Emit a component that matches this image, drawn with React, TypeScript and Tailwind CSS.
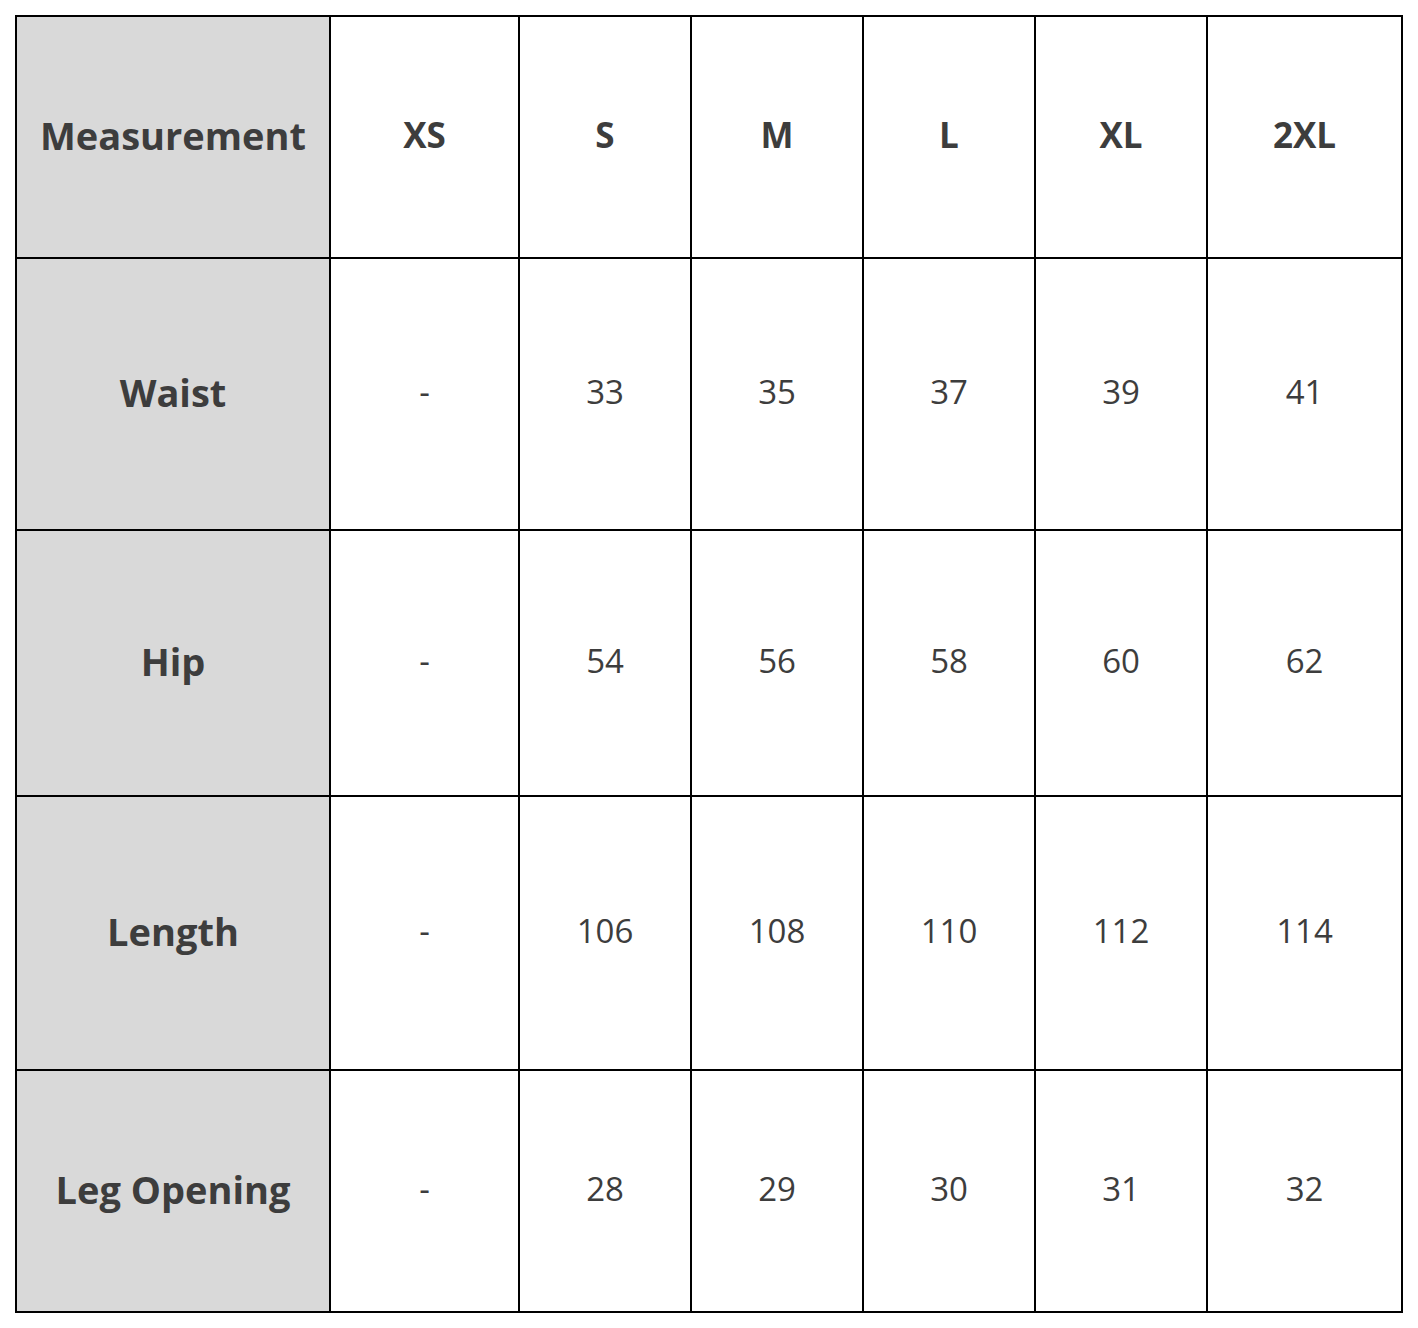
const sizes = ["XS", "S", "M", "L", "XL", "2XL"];

const rows: { label: string; values: string[] }[] = [
  { label: "Waist", values: ["-", "33", "35", "37", "39", "41"] },
  { label: "Hip", values: ["-", "54", "56", "58", "60", "62"] },
  { label: "Length", values: ["-", "106", "108", "110", "112", "114"] },
  { label: "Leg Opening", values: ["-", "28", "29", "30", "31", "32"] },
];

function App() {
  return (
    <div className="min-h-[1328px] w-[1418px] bg-white pl-[15px] pt-[15px] font-['Open_Sans','Noto_Sans',sans-serif] text-[#3d3d3d]">
      <div className="grid w-[1388px] grid-cols-[312px_187px_170px_170px_170px_170px_193px] grid-rows-[240px_270px_264px_272px_240px] gap-[2px] bg-black p-[2px]">
        <div className="flex items-center justify-center bg-[#d9d9d9] pb-1 text-[38px] font-bold">Measurement</div>
        {sizes.map((s) => (
          <div key={s} className="flex items-center justify-center bg-white pb-1 text-[35px] font-bold">
            {s}
          </div>
        ))}
        {rows.map((row) => (
          <Row key={row.label} label={row.label} values={row.values} />
        ))}
      </div>
    </div>
  );
}

function Row({ label, values }: { label: string; values: string[] }) {
  return (
    <>
      <div className="flex items-center justify-center bg-[#d9d9d9] pb-1 text-[38px] font-bold">{label}</div>
      {values.map((v, i) => (
        <div key={i} className="flex items-center justify-center bg-white pb-1 text-[33px]">
          {v}
        </div>
      ))}
    </>
  );
}

export default App;
